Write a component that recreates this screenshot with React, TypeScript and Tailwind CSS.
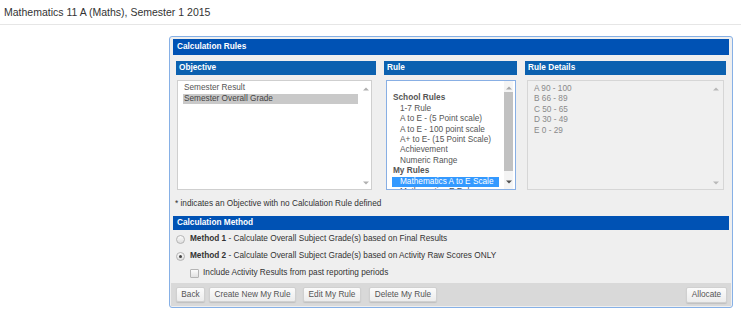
import React from "react";

const Up = ({ c }: { c: string }) => (
  <svg width="6" height="4" viewBox="0 0 6 4" className="block">
    <path d="M0 3.5 L3 0.5 L6 3.5 Z" fill={c} />
  </svg>
);
const Down = ({ c }: { c: string }) => (
  <svg width="6" height="4" viewBox="0 0 6 4" className="block">
    <path d="M0 0.5 L3 3.5 L6 0.5 Z" fill={c} />
  </svg>
);

const ColHeader = ({ children }: { children: React.ReactNode }) => (
  <div className="h-[14px] bg-[#0b61b0] text-white font-bold text-[8.25px] leading-[14px] pl-[3px]">
    {children}
  </div>
);

const Radio = ({ checked }: { checked?: boolean }) => (
  <span className="w-[9px] h-[9px] rounded-full border border-[#b4b4b4] bg-linear-to-b from-[#fbfbfb] to-[#dedede] flex items-center justify-center shrink-0">
    {checked && <span className="w-[3px] h-[3px] rounded-full bg-[#444]" />}
  </span>
);

const Btn = ({ children, className = "" }: { children: React.ReactNode; className?: string }) => (
  <div
    className={`h-[15px] px-0 rounded-[2px] border border-[#d0d0d0] bg-linear-to-b from-[#fbfbfb] to-[#ececec] shadow-[0_1px_1px_rgba(0,0,0,0.12)] text-[8.25px] leading-[13px] text-[#555] whitespace-nowrap flex items-center justify-center shrink-0 ${className}`}
  >
    {children}
  </div>
);

export default function App() {
  const ruleItems: { t: string; bold?: boolean; sub?: boolean; sel?: boolean }[] = [
    { t: "\u00a0" },
    { t: "School Rules", bold: true },
    { t: "1-7 Rule", sub: true },
    { t: "A to E - (5 Point scale)", sub: true },
    { t: "A to E - 100 point scale", sub: true },
    { t: "A+ to E- (15 Point Scale)", sub: true },
    { t: "Achievement", sub: true },
    { t: "Numeric Range", sub: true },
    { t: "My Rules", bold: true },
    { t: "Mathematics A to E Scale", sub: true, sel: true },
    { t: "Mathematics E Rules", sub: true },
  ];
  const details = ["A 90 - 100", "B 66 - 89", "C 50 - 65", "D 30 - 49", "E 0 - 29"];

  return (
    <div className="w-[741px] h-[319px] bg-white overflow-hidden font-['Liberation_Sans',Arial,sans-serif] text-[#333]">
      <div className="h-[25px] border-b border-[#e6e6e6] pl-[4px] text-[10.5px] leading-[24px] text-[#333]">
        Mathematics 11 A (Maths), Semester 1 2015
      </div>

      <div className="ml-[169px] mt-[11px] w-[564px] h-[272px] border border-[#86b0e6] rounded-[3px] bg-[#efefef] flex flex-col">
        {/* Calculation Rules header */}
        <div className="mt-[2px] mx-[3px] h-[16px] bg-[#0052b4] text-white font-bold text-[8.25px] leading-[16px] pl-[4px]">
          Calculation Rules
        </div>

        {/* columns */}
        <div className="flex ml-[6px] mt-[6px] gap-[8px]">
          {/* Objective */}
          <div className="w-[200px] flex flex-col">
            <ColHeader>Objective</ColHeader>
            <div className="relative mt-[5px] ml-[1px] w-[195px] h-[110px] bg-white border border-[#cfcfcf] text-[8.25px] text-[#555]">
              <div className="pl-[5px] pr-[13px] pt-[2px]">
                <div className="leading-[10.5px] pl-[1px]">Semester Result</div>
                <div className="leading-[10.5px] pl-[1px] bg-[#c9c9c9] text-[#444]">Semester Overall Grade</div>
              </div>
              <div className="absolute right-[2px] top-[6px]"><Up c="#b0b0b0" /></div>
              <div className="absolute right-[2px] bottom-[4px]"><Down c="#b0b0b0" /></div>
            </div>
          </div>

          {/* Rule */}
          <div className="w-[133px] flex flex-col">
            <ColHeader>Rule</ColHeader>
            <div className="relative mt-[5px] ml-[2px] w-[130px] h-[110px] bg-white border border-[#88afe4] overflow-hidden text-[8.25px] text-[#555]">
              <div className="pl-[5px] pr-[16px] pt-[2px]">
                {ruleItems.map((it, i) => (
                  <div
                    key={i}
                    className={`leading-[10.4px] whitespace-nowrap ${it.sub ? "pl-[8px]" : "pl-[1px]"} ${
                      it.bold ? "font-bold text-[#555]" : ""
                    } ${it.sel ? "bg-[#3399ff] text-white" : ""}`}
                  >
                    {it.t}
                  </div>
                ))}
              </div>
              <div className="absolute right-[2px] top-0 bottom-0 w-[9px] bg-[#f4f4f4]">
                <div className="absolute left-[1.5px] top-[5px]"><Up c="#a8a8a8" /></div>
                <div className="absolute left-0 right-0 top-[11px] h-[79px] bg-[#c1c1c1]" />
                <div className="absolute left-[1.5px] bottom-[5px]"><Down c="#505050" /></div>
              </div>
            </div>
          </div>

          {/* Rule Details */}
          <div className="w-[201px] flex flex-col">
            <ColHeader>Rule Details</ColHeader>
            <div className="relative mt-[5px] ml-[2px] w-[197px] h-[110px] bg-[#f0f0f0] border border-[#d6d6d6] text-[8.25px] text-[#8a8a8a]">
              <div className="pl-[5px] pt-[3px]">
                {details.map((d) => (
                  <div key={d} className="leading-[10.4px] pl-[1px]">
                    {d}
                  </div>
                ))}
              </div>
              <div className="absolute right-[4px] top-[6px]"><Up c="#b8b8b8" /></div>
              <div className="absolute right-[4px] bottom-[4px]"><Down c="#b8b8b8" /></div>
            </div>
          </div>
        </div>

        {/* note */}
        <div className="mt-[9px] ml-[5px] h-[10px] text-[8.25px] leading-[10px] text-[#333]">
          * indicates an Objective with no Calculation Rule defined
        </div>

        {/* Calculation Method header */}
        <div className="mt-[7px] mx-[3px] h-[14px] bg-[#0052b4] text-white font-bold text-[8.25px] leading-[14px] pl-[4px]">
          Calculation Method
        </div>

        <div className="mt-[1px] h-[17px] flex items-center pl-[6px] text-[8.25px] text-[#333]">
          <Radio />
          <span className="ml-[5px]">
            <b>Method 1</b> - Calculate Overall Subject Grade(s) based on Final Results
          </span>
        </div>
        <div className="h-[17px] flex items-center pl-[6px] text-[8.25px] text-[#333]">
          <Radio checked />
          <span className="ml-[5px]">
            <b>Method 2</b> - Calculate Overall Subject Grade(s) based on Activity Raw Scores ONLY
          </span>
        </div>
        <div className="h-[17px] flex items-center pl-[20px] text-[8.25px] text-[#333]">
          <span className="w-[9px] h-[9px] rounded-[1px] border border-[#b4b4b4] bg-linear-to-b from-[#fbfbfb] to-[#e2e2e2] shrink-0" />
          <span className="ml-[4px]">Include Activity Results from past reporting periods</span>
        </div>

        {/* button bar */}
        <div className="mt-[1px] mx-[1px] h-[23px] bg-[#d9d9d9] flex items-center pl-[5px] pr-[4px]">
          <Btn className="w-[29px]">Back</Btn>
          <Btn className="ml-[4px] w-[87px]">Create New My Rule</Btn>
          <Btn className="ml-[7px] w-[58px]">Edit My Rule</Btn>
          <Btn className="ml-[8px] w-[68px]">Delete My Rule</Btn>
          <div className="flex-1" />
          <Btn className="w-[41px] h-[16px]">Allocate</Btn>
        </div>
      </div>
    </div>
  );
}
